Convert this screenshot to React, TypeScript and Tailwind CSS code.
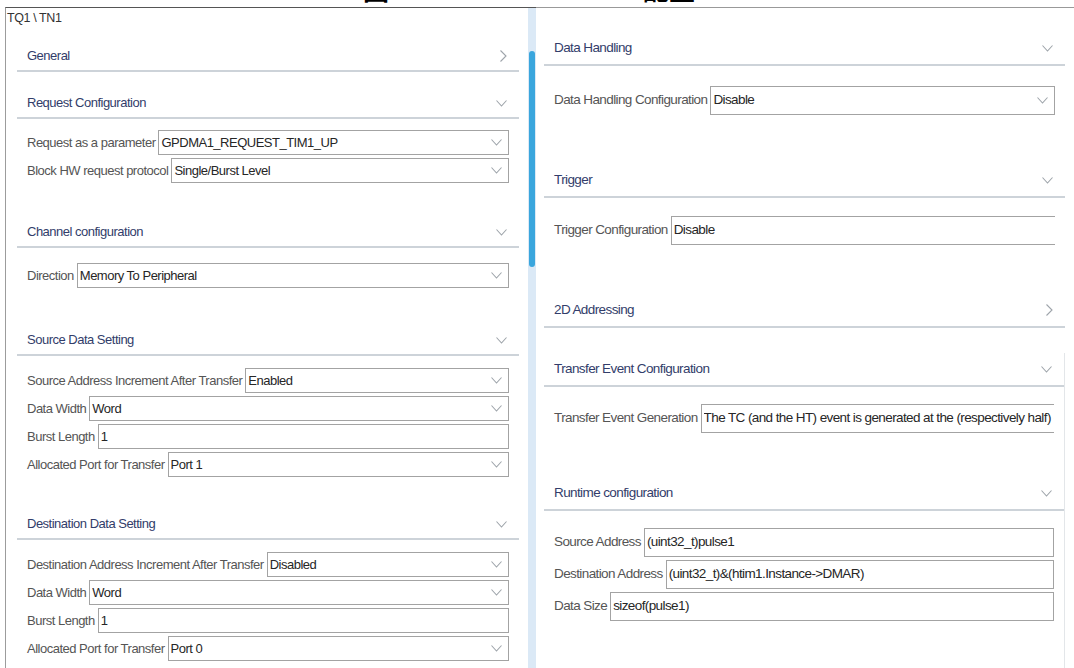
import React from 'react';

type Field = {
  label: string;
  value: string;
  select?: boolean;
  clipped?: boolean;
};

type SectionProps = {
  title: string;
  collapsed?: boolean;
  fields?: Field[];
  side: 'left' | 'right';
  top: string;
  body?: string;
};

function ChevronDown() {
  return (
    <svg width="11" height="7" viewBox="0 0 11 7" fill="none" className="shrink-0">
      <polyline points="0.5,0.5 5.5,6 10.5,0.5" stroke="#9ea4aa" strokeWidth="1.1" />
    </svg>
  );
}

function ChevronRight() {
  return (
    <svg width="7" height="12" viewBox="0 0 7 12" fill="none" className="shrink-0">
      <polyline points="0.5,0.5 6,6 0.5,11.5" stroke="#9ea4aa" strokeWidth="1.1" />
    </svg>
  );
}

function FieldRow({ field, side }: {field: Field;side: 'left' | 'right';}) {
  const big = side === 'right';
  return (
    <div className="flex items-center">
      <span className="whitespace-nowrap text-[#555]">{field.label}</span>
      <div
        className={`ml-[3px] flex min-w-0 flex-1 items-center border border-[#a3a3a3] bg-white pl-[2px] ${
        big ? 'h-[29px]' : 'h-[25px]'} ${
        field.clipped ? 'border-r-0' : 'pr-[6px]'}`}>

        <span className="min-w-0 flex-1 overflow-hidden whitespace-nowrap text-[#262626]">
          {field.value}
        </span>
        {field.select && <ChevronDown />}
      </div>
    </div>);

}

function Section({ title, collapsed, fields = [], side, top, body }: SectionProps) {
  const big = side === 'right';
  return (
    <div className={top}>
      <div
        className={`flex items-center justify-between border-b-2 border-[#cdd3d9] pl-[10px] pr-[12px] text-[#323d6a] ${
        big ? 'h-[34px] text-[13.5px] tracking-[-0.6px]' : 'h-[30px] text-[13px] tracking-[-0.5px]'}`}>

        <span>{title}</span>
        {collapsed ? <ChevronRight /> : <ChevronDown />}
      </div>
      {fields.length > 0 &&
      <div
        className={`flex flex-col gap-[3px] pl-[10px] pr-[10px] ${
        big ? 'text-[13.5px] tracking-[-0.6px]' : 'text-[13px] tracking-[-0.5px]'} ${body}`}>

          {fields.map((f) =>
        <FieldRow key={f.label + f.value} field={f} side={side} />
        )}
        </div>
      }
    </div>);

}

export default function App() {
  return (
    <div className="flex h-[668px] w-[1074px] flex-col overflow-hidden bg-white font-['Liberation_Sans',Arial,sans-serif]">
      {/* figure caption, mostly scrolled off the top */}
      <div className="h-[7px] overflow-hidden">
        <div className="-mt-[22px] text-center text-[26px] font-bold leading-[26px] text-black">
          <span className="ml-[-16px] font-['Liberation_Sans','Noto_Sans_CJK_SC',sans-serif]">
            图 3. Linked-List Node 配置
          </span>
        </div>
      </div>

      <div className="flex min-h-0 flex-1">
        {/* left panel */}
        <div className="ml-[5px] w-[523px] shrink-0 border-l border-t border-l-[#9c9c9c] border-t-[#555]">
          <div className="flex h-[20px] items-center pl-[1px] text-[12.5px] leading-none tracking-[-0.4px] text-[#333]">
            TQ1 \ TN1
          </div>
          <div className="pl-[11px] pr-[9px]">
            <Section side="left" title="General" collapsed top="mt-[14px]" />
            <Section
              side="left"
              title="Request Configuration"
              top="mt-[17px]"
              body="pt-[11px]"
              fields={[
              { label: 'Request as a parameter', value: 'GPDMA1_REQUEST_TIM1_UP', select: true },
              { label: 'Block HW request protocol', value: 'Single/Burst Level', select: true }]
              } />

            <Section
              side="left"
              title="Channel configuration"
              top="mt-[35px]"
              body="pt-[15px]"
              fields={[{ label: 'Direction', value: 'Memory To Peripheral', select: true }]} />

            <Section
              side="left"
              title="Source Data Setting"
              top="mt-[38px]"
              body="pt-[12px]"
              fields={[
              { label: 'Source Address Increment After Transfer', value: 'Enabled', select: true },
              { label: 'Data Width', value: 'Word', select: true },
              { label: 'Burst Length', value: '1' },
              { label: 'Allocated Port for Transfer', value: 'Port 1', select: true }]
              } />

            <Section
              side="left"
              title="Destination Data Setting"
              top="mt-[33px]"
              body="pt-[12px]"
              fields={[
              { label: 'Destination Address Increment After Transfer', value: 'Disabled', select: true },
              { label: 'Data Width', value: 'Word', select: true },
              { label: 'Burst Length', value: '1' },
              { label: 'Allocated Port for Transfer', value: 'Port 0', select: true }]
              } />

          </div>
        </div>

        {/* scrollbar */}
        <div className="w-[8px] shrink-0 border-t border-t-[#555] bg-[#dbe9f6]">
          <div className="mx-auto mt-[43px] h-[216px] w-[6px] rounded-full bg-[#3aa6dd]" />
        </div>

        {/* right panel */}
        <div className="min-w-0 flex-1 border-t border-t-[#999] pl-[8px] pr-[9px]">
          <Section
            side="right"
            title="Data Handling"
            top="mt-[24px]"
            body="pt-[20px]"
            fields={[{ label: 'Data Handling Configuration', value: 'Disable', select: true }]} />

          <Section
            side="right"
            title="Trigger"
            top="mt-[49px]"
            body="pt-[18px]"
            fields={[{ label: 'Trigger Configuration', value: 'Disable', clipped: true }]} />

          <Section side="right" title="2D Addressing" collapsed top="mt-[49px]" />
          <div className="border-r border-[#e3e6e9]">
            <Section
              side="right"
              title="Transfer Event Configuration"
              top="mt-[25px]"
              body="pt-[17px]"
              fields={[
              {
                label: 'Transfer Event Generation',
                value:
                'The TC (and the HT) event is generated at the (respectively half) end of each block',
                clipped: true
              }]
              } />

            <Section
              side="right"
              title="Runtime configuration"
              top="mt-[44px]"
              body="pt-[17px] pb-[60px]"
              fields={[
              { label: 'Source Address', value: '(uint32_t)pulse1' },
              { label: 'Destination Address', value: '(uint32_t)&(htim1.Instance->DMAR)' },
              { label: 'Data Size', value: 'sizeof(pulse1)' }]
              } />
          </div>

        </div>
      </div>
    </div>);

}
